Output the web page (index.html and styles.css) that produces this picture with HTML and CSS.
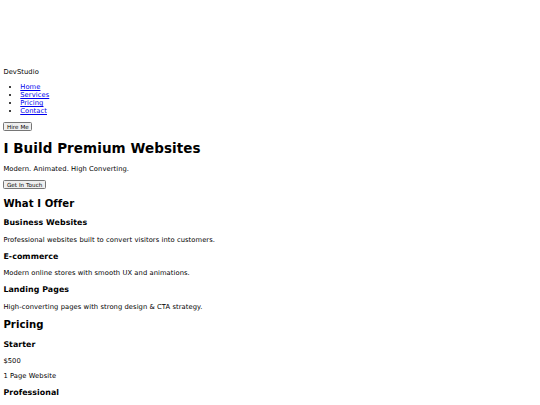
FILE: index.html
```html
<!DOCTYPE html>
<html lang="en">
<head>
<meta charset="utf-8">
<title>DevStudio</title>
<link rel="stylesheet" href="styles.css">
</head>
<body>
<div class="loader"></div>
<header class="site-header">
  <div class="logo">DevStudio</div>
  <nav class="nav">
    <ul>
      <li><a href="#">Home</a></li>
      <li><a href="#">Services</a></li>
      <li><a href="#">Pricing</a></li>
      <li><a href="#">Contact</a></li>
    </ul>
  </nav>
  <button class="btn">Hire Me</button>
</header>
<section class="hero">
  <h1>I Build Premium Websites</h1>
  <p>Modern. Animated. High Converting.</p>
  <button class="btn">Get In Touch</button>
</section>
<section class="services">
  <h2>What I Offer</h2>
  <div class="card">
    <h3>Business Websites</h3>
    <p>Professional websites built to convert visitors into customers.</p>
  </div>
  <div class="card">
    <h3>E-commerce</h3>
    <p>Modern online stores with smooth UX and animations.</p>
  </div>
  <div class="card">
    <h3>Landing Pages</h3>
    <p>High-converting pages with strong design &amp; CTA strategy.</p>
  </div>
</section>
<section class="pricing">
  <h2>Pricing</h2>
  <div class="card">
    <h3>Starter</h3>
    <p>$500</p>
    <p>1 Page Website</p>
  </div>
  <div class="card">
    <h3>Professional</h3>
    <p>$1200</p>
    <p>5 Page Website</p>
  </div>
</section>
</body>
</html>
```
FILE: styles.css
```css
html {
  zoom: 0.421875;
}
body {
  font-family: "DejaVu Sans", sans-serif;
  line-height: 1.21;
  letter-spacing: 0.01em;
  color: #000;
  background: #fff;
}
.loader {
  height: 153px;
}
.site-header {
  display: block;
}
.btn {
  font-family: "DejaVu Sans", sans-serif;
  letter-spacing: 0.01em;
}
```
